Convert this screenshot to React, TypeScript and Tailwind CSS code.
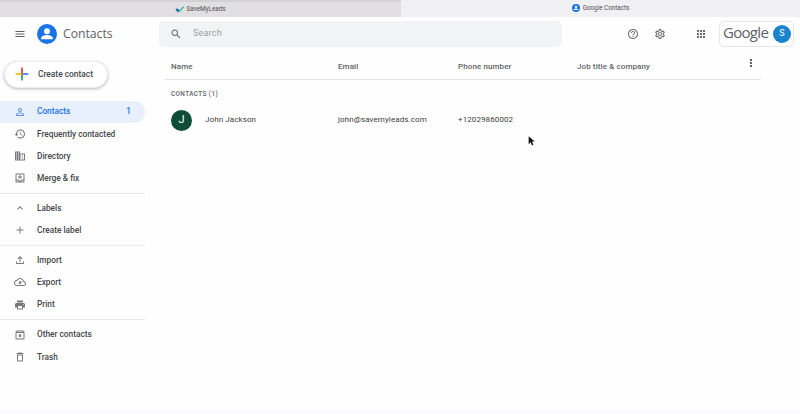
const P = {
  menu: "M3 18h18v-2H3v2zm0-5h18v-2H3v2zm0-7v2h18V6H3z",
  person: "M12 5.9a2.1 2.1 0 110 4.2 2.1 2.1 0 010-4.2m0 9c2.97 0 6.1 1.46 6.1 2.1v1.1H5.9V17c0-.64 3.13-2.1 6.1-2.1M12 4C9.79 4 8 5.79 8 8s1.79 4 4 4 4-1.79 4-4-1.79-4-4-4zm0 9c-2.67 0-8 1.34-8 4v3h16v-3c0-2.66-5.33-4-8-4z",
  history: "M13 3c-4.97 0-9 4.03-9 9H1l3.89 3.89.07.14L9 12H6c0-3.87 3.13-7 7-7s7 3.13 7 7-3.13 7-7 7c-1.93 0-3.68-.79-4.94-2.06l-1.42 1.42C8.27 19.99 10.51 21 13 21c4.97 0 9-4.03 9-9s-4.03-9-9-9zm-1 5v5l4.28 2.54.72-1.21-3.5-2.08V8H12z",
  domain: "M12 7V3H2v18h20V7H12zM6 19H4v-2h2v2zm0-4H4v-2h2v2zm0-4H4V9h2v2zm0-4H4V5h2v2zm4 12H8v-2h2v2zm0-4H8v-2h2v2zm0-4H8V9h2v2zm0-4H8V5h2v2zm10 12h-8v-2h2v-2h-2v-2h2v-2h-2V9h8v10zm-2-8h-2v2h2v-2zm0 4h-2v2h2v-2z",
  merge: "M19 3H5c-1.1 0-2 .9-2 2v14c0 1.1.9 2 2 2h14c1.1 0 2-.9 2-2V5c0-1.1-.9-2-2-2zm0 16H5v-2h3l2 2h4l2-2h3v2zm0-4h-4l-3 3-3-3H5V5h14v10zM13 6h-2v3H8v2h3v3h2v-3h3V9h-3V6z",
  up: "M12 8l-6 6 1.41 1.41L12 10.83l4.59 4.58L18 14z",
  add: "M19 13h-6v6h-2v-6H5v-2h6V5h2v6h6v2z",
  upload: "M18 15v3H6v-3H4v3c0 1.1.9 2 2 2h12c1.1 0 2-.9 2-2v-3h-2zM7 9l1.41 1.41L11 7.83V16h2V7.83l2.59 2.58L17 9l-5-5-5 5z",
  cloud: "M19.35 10.04C18.67 6.59 15.64 4 12 4 9.11 4 6.6 5.64 5.35 8.04 2.34 8.36 0 10.91 0 14c0 3.31 2.69 6 6 6h13c2.76 0 5-2.24 5-5 0-2.64-2.05-4.78-4.65-4.96zM19 18H6c-2.21 0-4-1.79-4-4 0-2.05 1.53-3.76 3.56-3.97l1.07-.11.5-.95C8.08 7.14 9.94 6 12 6c2.62 0 4.88 1.86 5.39 4.43l.3 1.5 1.53.11c1.56.1 2.78 1.41 2.78 2.96 0 1.65-1.35 3-3 3zm-5.55-8h-2.9v3H8l4 4 4-4h-2.55z",
  print: "M19 8H5c-1.66 0-3 1.34-3 3v6h4v4h12v-4h4v-6c0-1.66-1.34-3-3-3zm-3 11H8v-5h8v5zm3-7c-.55 0-1-.45-1-1s.45-1 1-1 1 .45 1 1-.45 1-1 1zm-1-9H6v4h12V3z",
  archive: "M20.54 5.23l-1.39-1.68C18.88 3.21 18.47 3 18 3H6c-.47 0-.88.21-1.16.55L3.46 5.23C3.17 5.57 3 6.02 3 6.5V19c0 1.1.9 2 2 2h14c1.1 0 2-.9 2-2V6.5c0-.48-.17-.93-.46-1.27zM6.24 5h11.52l.81.97H5.44l.8-.97zM5 19V8h14v11H5zm8.45-9h-2.9v3H8l4 4 4-4h-2.55z",
  trash: "M6 19c0 1.1.9 2 2 2h8c1.1 0 2-.9 2-2V7H6v12zM8 9h8v10H8V9zm7.5-5l-1-1h-5l-1 1H5v2h14V4z",
  search: "M15.5 14h-.79l-.28-.27C15.41 12.59 16 11.11 16 9.5 16 5.91 13.09 3 9.5 3S3 5.91 3 9.5 5.91 16 9.5 16c1.61 0 3.09-.59 4.23-1.57l.27.28v.79l5 4.99L20.49 19l-4.99-5zm-6 0C7.01 14 5 11.99 5 9.5S7.01 5 9.5 5 14 7.01 14 9.5 11.99 14 9.5 14z",
  help: "M11 18h2v-2h-2v2zm1-16C6.48 2 2 6.48 2 12s4.48 10 10 10 10-4.48 10-10S17.52 2 12 2zm0 18c-4.41 0-8-3.59-8-8s3.59-8 8-8 8 3.59 8 8-3.59 8-8 8zm0-14c-2.21 0-4 1.79-4 4h2c0-1.1.9-2 2-2s2 .9 2 2c0 2-3 1.75-3 5h2c0-2.25 3-2.5 3-5 0-2.21-1.79-4-4-4z",
  gear: "M19.43 12.98c.04-.32.07-.64.07-.98 0-.34-.03-.66-.07-.98l2.11-1.65c.19-.15.24-.42.12-.64l-2-3.46c-.09-.16-.26-.25-.44-.25-.06 0-.12.01-.17.03l-2.49 1c-.52-.4-1.08-.73-1.69-.98l-.38-2.65C14.46 2.18 14.25 2 14 2h-4c-.25 0-.46.18-.49.42l-.38 2.65c-.61.25-1.17.59-1.69.98l-2.49-1c-.06-.02-.12-.03-.18-.03-.17 0-.34.09-.43.25l-2 3.46c-.13.22-.07.49.12.64l2.11 1.65c-.04.32-.07.65-.07.98 0 .33.03.66.07.98l-2.11 1.65c-.19.15-.24.42-.12.64l2 3.46c.09.16.26.25.44.25.06 0 .12-.01.17-.03l2.49-1c.52.4 1.08.73 1.69.98l.38 2.65c.03.24.24.42.49.42h4c.25 0 .46-.18.49-.42l.38-2.65c.61-.25 1.17-.59 1.69-.98l2.49 1c.06.02.12.03.18.03.17 0 .34-.09.43-.25l2-3.46c.12-.22.07-.49-.12-.64l-2.11-1.65zm-1.98-1.71c.04.31.05.52.05.73 0 .21-.02.43-.05.73l-.14 1.13.89.7 1.08.84-.7 1.21-1.27-.51-1.04-.42-.9.68c-.43.32-.84.56-1.25.73l-1.06.43-.16 1.13-.2 1.35h-1.4l-.19-1.35-.16-1.13-1.06-.43c-.43-.18-.83-.41-1.23-.71l-.91-.7-1.06.43-1.27.51-.7-1.21 1.08-.84.89-.7-.14-1.13c-.03-.31-.05-.54-.05-.74s.02-.43.05-.73l.14-1.13-.89-.7-1.08-.84.7-1.21 1.27.51 1.04.42.9-.68c.43-.32.84-.56 1.25-.73l1.06-.43.16-1.13.2-1.35h1.39l.19 1.35.16 1.13 1.06.43c.43.18.83.41 1.23.71l.91.7 1.06-.43 1.27-.51.7 1.21-1.07.85-.89.7.14 1.13zM12 8c-2.21 0-4 1.79-4 4s1.79 4 4 4 4-1.79 4-4-1.79-4-4-4zm0 6c-1.1 0-2-.9-2-2s.9-2 2-2 2 .9 2 2-.9 2-2 2z",
  apps: "M4 8h4V4H4v4zm6 12h4v-4h-4v4zm-6 0h4v-4H4v4zm0-6h4v-4H4v4zm6 0h4v-4h-4v4zm6-10v4h4V4h-4zm-6 4h4V4h-4v4zm6 6h4v-4h-4v4zm0 6h4v-4h-4v4z",
  more: "M12 8c1.1 0 2-.9 2-2s-.9-2-2-2-2 .9-2 2 .9 2 2 2zm0 2c-1.1 0-2 .9-2 2s.9 2 2 2 2-.9 2-2-.9-2-2-2zm0 6c-1.1 0-2 .9-2 2s.9 2 2 2 2-.9 2-2-.9-2-2-2z",
};

function Icon({ d, className }: { d: string; className: string }) {
  return (
    <svg viewBox="0 0 24 24" fill="currentColor" className={className}>
      <path d={d} />
    </svg>
  );
}

function AccountCircle({ className }: { className: string }) {
  return (
    <svg viewBox="0 0 24 24" className={className}>
      <circle cx="12" cy="12" r="12" fill="#1a73e8" />
      <circle cx="12" cy="8.6" r="3.6" fill="#fff" />
      <path d="M5 17.2c0-2.6 4.6-3.9 7-3.9s7 1.3 7 3.9v1H5z" fill="#fff" />
    </svg>
  );
}

function NavItem({ d, label, count, active }: { d: string; label: string; count?: string; active?: boolean }) {
  return (
    <div
      className={`flex h-[22.2px] w-[145px] items-center rounded-r-full pl-[14px] pr-[14px] ${
        active ? "bg-[#e8f0fe] text-[#1a73e8]" : "text-[#45484b]"
      }`}
    >
      <Icon d={d} className={`h-3 w-3 shrink-0 ${active ? "text-[#5f8fe0]" : "text-[#75797d]"}`} />
      <span className="ml-[11px] flex-1 text-[8.3px] font-medium">{label}</span>
      {count && <span className="text-[8.3px] font-medium">{count}</span>}
    </div>
  );
}

function Divider() {
  return <div className="my-[3.4px] h-px w-[145px] bg-[#e8e8ea]" />;
}

export default function App() {
  return (
    <div className="relative flex h-[414px] w-[800px] flex-col overflow-hidden bg-[#fefefe] font-['Roboto',sans-serif]">
      {/* Browser tabs */}
      <div className="flex h-[16.5px] shrink-0 text-[6.3px] text-[#4f4f52]">
        <div className="flex w-[401px] items-center justify-center border-t-2 border-[#d3d1d3] bg-[#e1dfe1] pr-[1px]">
          <svg viewBox="0 0 24 24" className="mr-[3px] h-[9px] w-[9px]">
            <path d="M1 11l6-2 5 5-4 6z" fill="#1e3fae" />
            <path d="M8 11l4 3L22 3l2 3-12 13-6-5z" fill="#22b8a0" />
          </svg>
          SaveMyLeads
        </div>
        <div className="flex flex-1 items-center justify-center bg-[#f1f0f2]">
          <AccountCircle className="mr-[3px] h-2 w-2" />
          Google Contacts
        </div>
      </div>

      {/* App header */}
      <div className="flex h-[35px] shrink-0 items-center">
        <Icon d={P.menu} className="ml-[14px] h-3 w-3 text-[#5f6368]" />
        <AccountCircle className="ml-[11px] h-5 w-5" />
        <span className="ml-[6px] w-[96px] font-['Open_Sans',sans-serif] text-[12.2px] text-[#5f6368]">Contacts</span>
        <div className="flex h-[26px] w-[403px] items-center rounded-[5px] bg-[#f1f3f4] pl-[11px]">
          <Icon d={P.search} className="h-3 w-3 text-[#5f6368]" />
          <span className="ml-[11px] text-[9px] tracking-[0.2px] text-[#9aa0a6]">Search</span>
        </div>
        <Icon d={P.help} className="ml-[65px] h-3 w-3 text-[#6b6f73]" />
        <Icon d={P.gear} className="ml-[15px] h-3 w-3 text-[#6b6f73]" />
        <Icon d={P.apps} className="ml-[29px] h-3 w-3 text-[#6b6f73]" />
        <div className="ml-[12px] flex h-[26px] w-[75px] items-center rounded-[5px] border border-[#e6e6e8] pl-[3px]">
          <span className="w-[50px] pb-[3px] font-['Open_Sans',sans-serif] text-[15px] leading-none tracking-[-0.7px] text-[#5f6368]">Google</span>
          <div className="flex h-[18px] w-[18px] items-center justify-center rounded-full bg-[#1a83d0] text-[9px] text-white">S</div>
        </div>
      </div>

      <div className="flex min-h-0 flex-1">
        {/* Sidebar */}
        <div className="w-[165px] shrink-0">
          <div className="ml-[4px] mt-[9px] flex h-[27px] w-[104px] items-center rounded-full border border-[#eceded] bg-white pl-[10px] shadow-[0_1px_3px_rgba(60,64,67,0.35)]">
            <svg viewBox="0 0 24 24" className="h-[14px] w-[14px]">
              <rect x="10.5" y="1" width="3" height="11" fill="#ea4335" />
              <rect x="10.5" y="12" width="3" height="11" fill="#34a853" />
              <rect x="1" y="10.5" width="10" height="3" fill="#fbbc04" />
              <rect x="13" y="10.5" width="10" height="3" fill="#4285f4" />
            </svg>
            <span className="ml-[9px] text-[8.4px] font-medium text-[#45484b]">Create contact</span>
          </div>
          <div className="mt-[13px]">
            <NavItem d={P.person} label="Contacts" count="1" active />
            <NavItem d={P.history} label="Frequently contacted" />
            <NavItem d={P.domain} label="Directory" />
            <NavItem d={P.merge} label="Merge & fix" />
            <Divider />
            <NavItem d={P.up} label="Labels" />
            <NavItem d={P.add} label="Create label" />
            <Divider />
            <NavItem d={P.upload} label="Import" />
            <NavItem d={P.cloud} label="Export" />
            <NavItem d={P.print} label="Print" />
            <Divider />
            <NavItem d={P.archive} label="Other contacts" />
            <NavItem d={P.trash} label="Trash" />
          </div>
        </div>

        {/* Contact table */}
        <div className="w-[596px] text-[8px] tracking-[0.1px]">
          <div className="flex h-[28px] items-center border-b border-[#e6e6e8] pl-[6px] pt-[4px] font-medium text-[#5f6368]">
            <span className="w-[167px]">Name</span>
            <span className="w-[120px]">Email</span>
            <span className="w-[119px]">Phone number</span>
            <span className="flex-1">Job title &amp; company</span>
            <Icon d={P.more} className="mr-[4px] h-3 w-3 -translate-y-[4px] text-[#3c4043]" />
          </div>
          <div className="pl-[6px] pt-[10px] text-[6.4px] font-medium leading-[9px] tracking-[0.4px] text-[#5f6368]">CONTACTS (1)</div>
          <div className="mt-[11px] flex h-[21px] items-center pl-[6px] text-[#3c4043]">
            <div className="flex h-[21px] w-[21px] items-center justify-center rounded-full bg-[#0f4c3a] text-[11px] text-white">J</div>
            <span className="ml-[13px] w-[133px]">John Jackson</span>
            <span className="w-[120px]">john@savemyleads.com</span>
            <span>+12029860002</span>
          </div>
        </div>
      </div>

      <div className="h-[5px] shrink-0 bg-[#fbfafc]" />

      {/* Mouse pointer */}
      <svg viewBox="0 0 12 16" className="absolute left-[528px] top-[136px] h-[11px] w-2">
        <path d="M1 0v12l3-3 2 5 2-1-2-5h4z" fill="#111" />
      </svg>
    </div>
  );
}
